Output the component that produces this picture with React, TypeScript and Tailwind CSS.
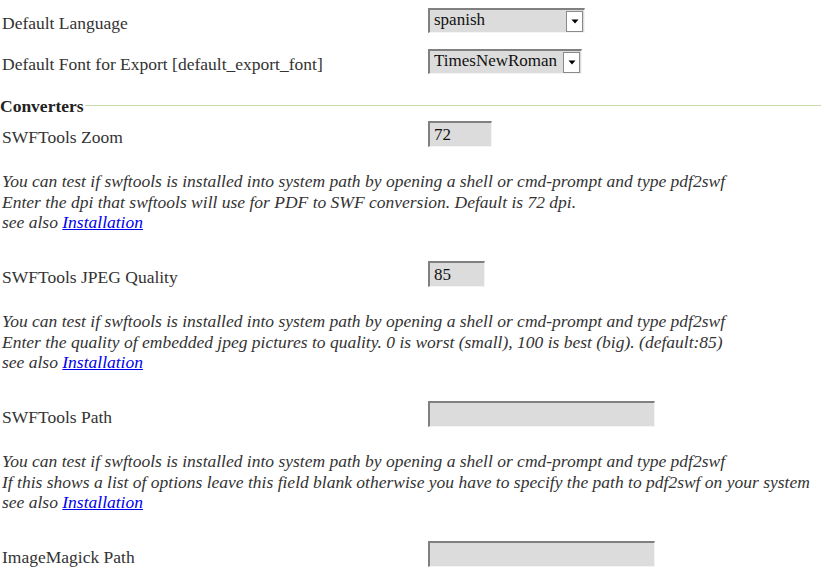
import React from "react";

const fieldBase =
  "bg-[#dcdcdc] border-t-2 border-l-2 border-r border-b border-t-[#808080] border-l-[#808080] border-r-[#f4f4f4] border-b-[#f4f4f4] text-[#111] leading-[20px] pl-[4px] flex items-center";

function FakeSelect({ value, width }: { value: string; width: string }) {
  return (
    <div className={fieldBase + " h-[25px] pr-0 " + width}>
      <span className="flex-1 whitespace-nowrap overflow-hidden -mt-[2px] text-[17px]">{value}</span>
      <span className="w-[17px] h-[21px] bg-white border border-[#8a8a8a] flex items-center justify-center mr-[1px]">
        <svg width="8" height="5" viewBox="0 0 8 5">
          <polygon points="0.5,0.5 7.5,0.5 4,4.5" fill="#000" />
        </svg>
      </span>
    </div>
  );
}

function FakeInput({ value, width }: { value?: string; width: string }) {
  return <div className={fieldBase + " h-[26px] text-[17px] " + width}>{value}</div>;
}

function Section({
  label,
  input,
  line2,
}: {
  label: string;
  input: React.ReactNode;
  line2: string;
}) {
  return (
    <div className="flex flex-col h-[140px]">
      <div className="flex h-[26px]">
        <div className="w-[428px] pt-[3px] pl-[2px]">{label}</div>
        <div>{input}</div>
      </div>
      <div className="mt-[24px] italic leading-[20.5px] pl-[2px] whitespace-nowrap">
        <div>You can test if swftools is installed into system path by opening a shell or cmd-prompt and type pdf2swf</div>
        <div>{line2}</div>
        <div>
          see also{" "}
          <a href="#" className="text-[#0000ee] underline">
            Installation
          </a>
        </div>
      </div>
    </div>
  );
}

export default function App() {
  return (
    <div className="w-[821px] h-[580px] overflow-hidden bg-white text-[#333] text-[17.5px] font-['Liberation_Serif',serif]">
      <div className="pt-[8px] flex flex-col">
        <div className="flex h-[25px]">
          <div className="w-[428px] pt-[2px] pl-[2px]">Default Language</div>
          <FakeSelect value="spanish" width="w-[157px]" />
        </div>
        <div className="flex h-[25px] mt-[16px]">
          <div className="w-[428px] pt-[2px] pl-[2px]">Default Font for Export [default_export_font]</div>
          <FakeSelect value="TimesNewRoman" width="w-[154px]" />
        </div>
        <div className="flex items-center mt-[24px] h-[16px]">
          <span className="font-bold leading-[16px] text-[#222]">Converters</span>
          <span className="flex-1 h-px bg-[#c6dcaa] ml-[1px] -mt-[1px]" />
        </div>
        <div className="mt-[7px]">
          <Section
            label="SWFTools Zoom"
            input={<FakeInput value="72" width="w-[64px]" />}
            line2="Enter the dpi that swftools will use for PDF to SWF conversion. Default is 72 dpi."
          />
          <Section
            label="SWFTools JPEG Quality"
            input={<FakeInput value="85" width="w-[57px]" />}
            line2="Enter the quality of embedded jpeg pictures to quality. 0 is worst (small), 100 is best (big). (default:85)"
          />
          <Section
            label="SWFTools Path"
            input={<FakeInput width="w-[227px]" />}
            line2="If this shows a list of options leave this field blank otherwise you have to specify the path to pdf2swf on your system"
          />
          <div className="flex h-[26px]">
            <div className="w-[428px] pt-[3px] pl-[2px]">ImageMagick Path</div>
            <FakeInput width="w-[227px]" />
          </div>
        </div>
      </div>
    </div>
  );
}
